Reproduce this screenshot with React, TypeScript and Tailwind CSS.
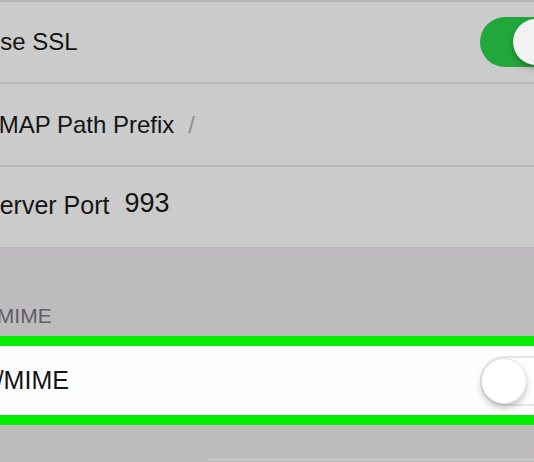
import React from "react";

function Toggle({ on }: { on: boolean }) {
  return (
    <div className="relative ml-auto -mr-[30px] h-[50px] w-[84px] shrink-0">
      {on ? (
        <div className="absolute inset-0 rounded-full bg-[#22a83a]" />
      ) : (
        <div className="absolute inset-0 rounded-full border-2 border-[#e6e6e6] bg-white" />
      )}
      <div
        className={
          on
            ? "absolute left-[33px] top-[2px] h-[46px] w-[46px] rounded-full bg-[#f2f2f2] shadow-[0_3px_6px_rgba(0,0,0,0.3)]"
            : "absolute left-[1px] top-[2px] h-[46px] w-[46px] rounded-full bg-white border border-[#e2e2e2] shadow-[0_4px_6px_rgba(0,0,0,0.22)]"
        }
      />
    </div>
  );
}

export default function App() {
  return (
    <div className="h-[462px] w-[534px] overflow-hidden bg-[#bdbbbe] font-['Liberation_Sans',Arial,sans-serif]">
      <div className="border-t-2 border-[#b7b7b7] bg-[#cbcbcb]">
        <div className="flex h-[82px] items-center overflow-hidden border-b-2 border-[#b9b9b9]">
          <span className="-ml-[17px] whitespace-nowrap text-[24px] text-[#141414]">Use SSL</span>
          <Toggle on={true} />
        </div>
        <div className="flex h-[83px] items-center overflow-hidden border-b-2 border-[#b9b9b9]">
          <span className="-ml-[8px] whitespace-nowrap text-[24px] text-[#141414]">IMAP Path Prefix</span>
          <span className="ml-[14px] text-[24px] text-[#8e8e93]">/</span>
        </div>
        <div className="flex h-[82px] items-center overflow-hidden border-b-2 border-[#b9b9b9]">
          <span className="-ml-[17px] -mt-[2px] whitespace-nowrap text-[25px] text-[#141414]">Server Port</span>
          <span className="ml-[15px] -mt-[8px] text-[27px] text-[#141414]">993</span>
        </div>
      </div>
      <div className="flex h-[87px] items-end overflow-hidden pb-[5px]">
        <span className="-ml-[23px] whitespace-nowrap text-[21px] text-[#5f5e63]">S/MIME</span>
      </div>
      <div className="flex h-[89px] items-center overflow-hidden border-y-[10px] border-[#02ee02] bg-[#fdfdfd]">
        <span className="-ml-[20px] whitespace-nowrap text-[25px] text-[#141414]">S/MIME</span>
        <Toggle on={false} />
      </div>
      <div className="h-[33px]" />
      <div className="ml-[208px] h-[3px] bg-[#c6c5c7]" />
    </div>
  );
}
